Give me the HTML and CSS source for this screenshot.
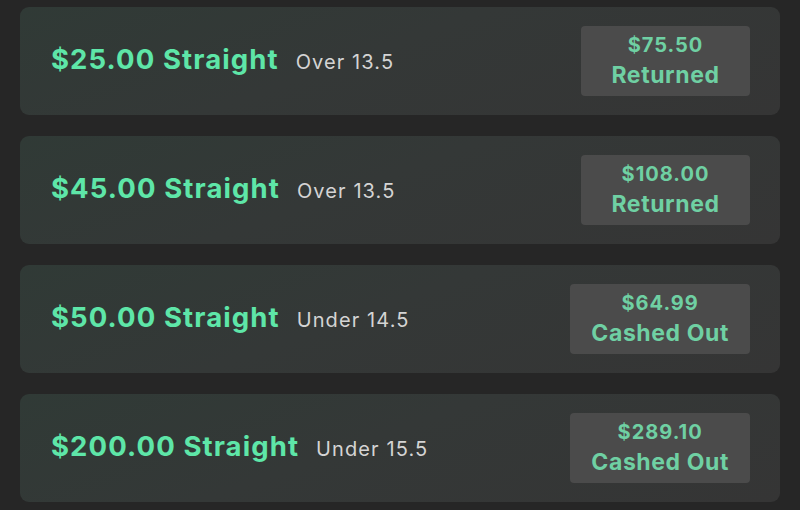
FILE: index.html
```html
<!DOCTYPE html>
<html>
<head>
<meta charset="utf-8">
<link rel="stylesheet" href="styles.css">
</head>
<body>
<div class="list">
  <div class="card">
    <div class="info"><span class="title">$25.00 Straight</span><span class="sub">Over 13.5</span></div>
    <div class="badge"><span class="amount">$75.50</span><span class="status">Returned</span></div>
  </div>
  <div class="card">
    <div class="info"><span class="title">$45.00 Straight</span><span class="sub">Over 13.5</span></div>
    <div class="badge"><span class="amount">$108.00</span><span class="status">Returned</span></div>
  </div>
  <div class="card">
    <div class="info"><span class="title">$50.00 Straight</span><span class="sub">Under 14.5</span></div>
    <div class="badge"><span class="amount">$64.99</span><span class="status">Cashed Out</span></div>
  </div>
  <div class="card">
    <div class="info"><span class="title">$200.00 Straight</span><span class="sub">Under 15.5</span></div>
    <div class="badge"><span class="amount">$289.10</span><span class="status">Cashed Out</span></div>
  </div>
</div>
</body>
</html>
```
FILE: styles.css
```css
html, body {
  margin: 0;
  background: #262626;
}
body {
  font-family: "Inter", "Liberation Sans", sans-serif;
}
.list {
  display: flex;
  flex-direction: column;
  gap: 21px;
  padding: 7px 20px;
}
.card {
  height: 108px;
  box-sizing: border-box;
  border-radius: 9px;
  background: linear-gradient(160deg, #303a36 0%, #343837 45%, #353535 100%);
  display: flex;
  align-items: center;
  justify-content: space-between;
  padding: 0 30px 0 31px;
}
.info {
  display: flex;
  align-items: baseline;
  gap: 17px;
  margin-bottom: 4px;
}
.title {
  color: #5ee6a8;
  font-weight: 700;
  font-size: 27.5px;
  letter-spacing: 1.1px;
}
.sub {
  color: #d4d4d4;
  font-size: 20px;
  letter-spacing: 1.1px;
}
.badge {
  background: #4b4b4b;
  border-radius: 4px;
  min-width: 169px;
  height: 70px;
  box-sizing: border-box;
  padding: 0 21px 2px;
  display: flex;
  flex-direction: column;
  align-items: center;
  justify-content: center;
  color: #6fd0a3;
  font-weight: 700;
  line-height: 30px;
}
.amount {
  font-size: 20px;
  letter-spacing: 1px;
}
.status {
  font-size: 23px;
  letter-spacing: 0.6px;
}
```
